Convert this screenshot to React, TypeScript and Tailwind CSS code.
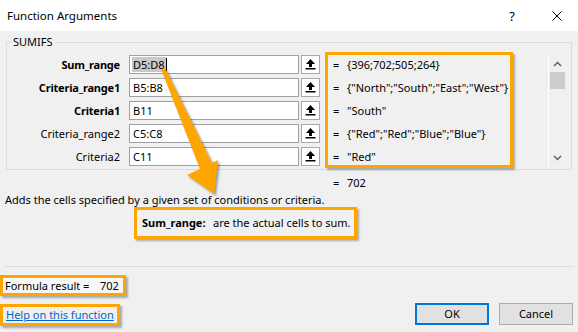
const args = [
  { label: "Sum_range", bold: true, value: "D5:D8", result: "{396;702;505;264}" },
  { label: "Criteria_range1", bold: true, value: "B5:B8", result: '{"North";"South";"East";"West"}' },
  { label: "Criteria1", bold: true, value: "B11", result: '"South"' },
  { label: "Criteria_range2", bold: false, value: "C5:C8", result: '{"Red";"Red";"Blue";"Blue"}' },
  { label: "Criteria2", bold: false, value: "C11", result: '"Red"' },
];

function CollapseIcon() {
  return (
    <svg width="11" height="11" viewBox="0 0 11 11">
      <polygon points="5.5,0 10,5 7,5 7,8 4,8 4,5 1,5" fill="#000" />
      <rect x="0.5" y="9" width="10" height="1.5" fill="#000" />
    </svg>
  );
}

function ArgRow({ label, bold, value, first }: { label: string; bold: boolean; value: string; first: boolean }) {
  return (
    <div className="flex h-[19px] items-center">
      <span className={`w-[113px] text-right ${bold ? "font-bold tracking-[-0.2px]" : ""}`}>{label}</span>
      <div className="ml-[9px] flex h-[19px] w-[170px] items-center border border-[#a0a0a0] bg-white pl-[2px]">
        {first ? (
          <>
            <span className="bg-[#c9c9c9] px-px leading-[15px]">{value}</span>
            <span className="h-[14px] w-px bg-black" />
          </>
        ) : (
          <span className="pl-px">{value}</span>
        )}
      </div>
      <div className="ml-[2px] flex h-[19px] w-[19px] items-center justify-center border border-[#a9a9a9] bg-white">
        <CollapseIcon />
      </div>
    </div>
  );
}

function Scrollbar() {
  return (
    <div className="ml-[35px] mt-[3px] flex h-[112px] w-[17px] flex-col items-center border-l border-white">
      <svg className="mt-[6px]" width="9" height="6" viewBox="0 0 9 6">
        <path d="M1 5 L4.5 1.5 L8 5" stroke="#606060" strokeWidth="1.5" fill="none" />
      </svg>
      <div className="mt-[5px] h-[17px] w-[15px] bg-[#cdcdcd]" />
      <svg className="mt-auto mb-[6px]" width="9" height="6" viewBox="0 0 9 6">
        <path d="M1 1 L4.5 4.5 L8 1" stroke="#606060" strokeWidth="1.5" fill="none" />
      </svg>
    </div>
  );
}

export default function App() {
  return (
    <div className="relative h-[332px] w-[578px] overflow-hidden whitespace-nowrap bg-[#f0f0f0] font-['Noto_Sans',sans-serif] text-[11px] leading-[16px] text-black">
      {/* title bar */}
      <div className="flex h-[31px] items-center bg-white pl-[7px] text-[11.5px]">
        <span>Function Arguments</span>
        <div className="ml-auto flex items-center pr-[16px]">
          <span className="w-[10px] text-center text-[13px]">?</span>
          <svg className="ml-[35px]" width="10" height="10" viewBox="0 0 10 10">
            <path d="M0.5 0.5 L9.5 9.5 M9.5 0.5 L0.5 9.5" stroke="#000" strokeWidth="1" />
          </svg>
        </div>
      </div>

      {/* SUMIFS group */}
      <fieldset className="ml-[6px] mt-[4px] w-[566px] border border-[#dcdcdc] pb-[1px]">
        <legend className="ml-[4px] px-[2px] leading-[14px]">SUMIFS</legend>
        <div className="flex items-start pt-[3px]">
          <div className="flex flex-col gap-[4px] pt-[3px]">
            {args.map((a, i) => (
              <ArgRow key={a.label} label={a.label} bold={a.bold} value={a.value} first={i === 0} />
            ))}
          </div>
          <div className="ml-[5px] h-[116px] w-[188px] border-[3px] border-[#ffa500] shadow-[2px_2px_2px_rgba(0,0,0,0.3)]">
            <div className="-mt-[2px] flex flex-col pl-[5px]">
              {args.map((a) => (
                <div key={a.label} className="flex h-[23px] items-center">
                  <span className="w-[14px]">=</span>
                  <span>{a.result}</span>
                </div>
              ))}
            </div>
          </div>
          <Scrollbar />
        </div>
      </fieldset>

      <div className="ml-[333px] mt-[5px] flex">
        <span className="w-[14px]">=</span>
        <span>702</span>
      </div>
      <p className="mt-[1px] pl-[5px]">Adds the cells specified by a given set of conditions or criteria.</p>

      <div className="-mt-px ml-[134px] flex h-[32px] w-[223px] items-center border-[3px] border-[#ffa500] pl-[5px] shadow-[2px_2px_2px_rgba(0,0,0,0.3)]">
        <span className="w-[71px] font-bold">Sum_range:</span>
        <span>are the actual cells to sum.</span>
      </div>

      <div className="ml-[5px] mr-[4px] mt-[27px] h-px bg-[#dcdcdc]" />

      <div className="flex items-end justify-between pr-[5px]">
        <div className="flex flex-col">
          <div className="mt-[8px] flex h-[21px] w-[126px] items-center border-[3px] border-[#ffa500] bg-[#f7f7f7] pl-[2px] shadow-[2px_2px_2px_rgba(0,0,0,0.3)]">
            <span className="w-[95px]">Formula result =</span>
            <span>702</span>
          </div>
          <div className="mt-[8px] flex h-[22px] w-[120px] items-center border-[3px] border-[#ffa500] pl-[3px] shadow-[2px_2px_2px_rgba(0,0,0,0.3)]">
            <a href="#" className="text-[#0066cc] underline">Help on this function</a>
          </div>
        </div>
        <div className="mb-px flex gap-[10px]">
          <button className="h-[22px] w-[74px] border-2 border-[#0078d7] bg-[#e1e1e1]">OK</button>
          <button className="h-[22px] w-[74px] border border-[#adadad] bg-[#e1e1e1]">Cancel</button>
        </div>
      </div>

      {/* callout arrow */}
      <svg className="pointer-events-none absolute inset-0 drop-shadow-[2px_2px_1px_rgba(0,0,0,0.35)]" width="578" height="332" viewBox="0 0 578 332">
        <polygon points="161,69 165,68 212,163 218,160 214,194 187,175 200,169" fill="#ffa500" />
      </svg>
    </div>
  );
}
